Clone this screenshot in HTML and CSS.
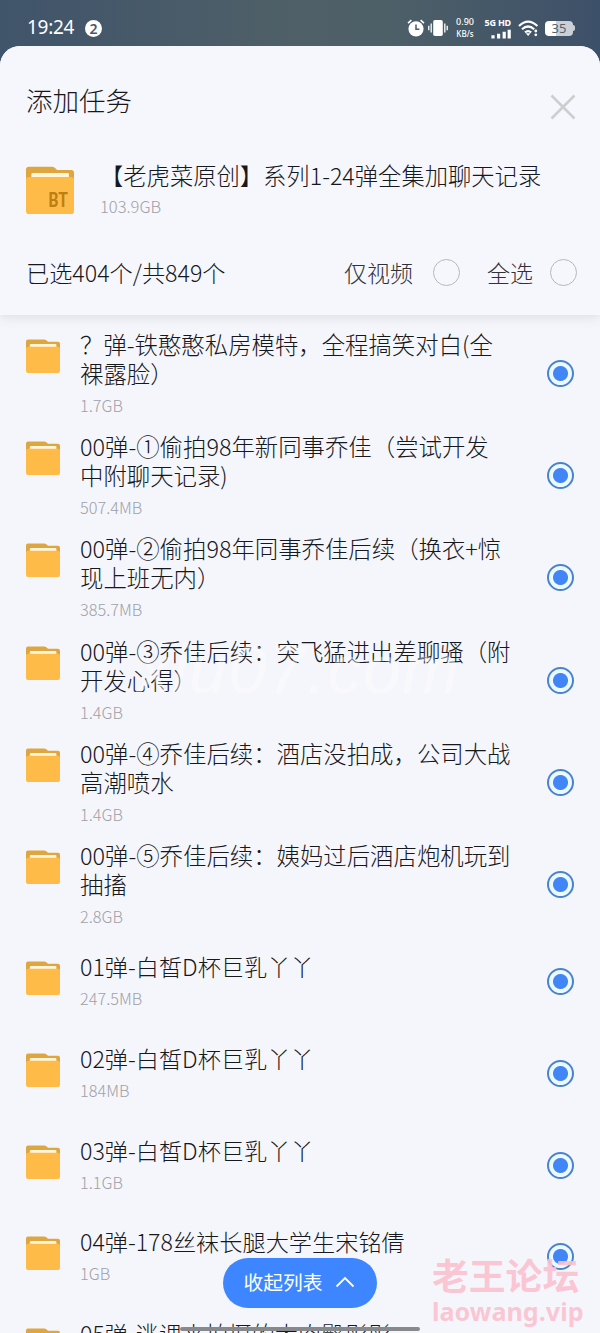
FILE: index.html
```html
<!DOCTYPE html>
<html lang="zh-CN">
<head>
<meta charset="utf-8">
<title>添加任务</title>
<link rel="stylesheet" href="styles.css">
</head>
<body>
<svg width="0" height="0" class="defs">
  <symbol id="folder" viewBox="0 0 34 34"><path d="M0 2.5Q0 .5 2 .5H18.5Q20 .5 21.2 2L22 2.8H32Q34 2.8 34 5V20H0Z" fill="#dfa640"/><rect x="3.8" y="5" width="26.6" height="6" rx="1" fill="#fff6dc"/><path d="M0 10Q0 7.8 2 7.8H32Q34 7.8 34 10V31.8Q34 34 32 34H2Q0 34 0 31.8Z" fill="#febb47"/></symbol>
</svg>
<div class="screen">
  <div class="status">
    <span class="time">19:24</span><span class="count">2</span>
    <div class="icons">
      <svg class="alarm" width="18" height="18" viewBox="0 0 18 18"><circle cx="9" cy="9.8" r="7.6" fill="#fff"/><path d="M1 4.2L4.4 1.2M17 4.2L13.6 1.2" stroke="#fff" stroke-width="1.6"/><path d="M9 5.5V10.3H12.4" fill="none" stroke="#4a5b68" stroke-width="1.5"/></svg>
      <svg class="vibrate" width="20" height="18" viewBox="0 0 20 18"><rect x="5.2" y="1" width="9.6" height="16" rx="1.8" fill="#fff"/><path d="M3.2 4.5V13.5M.8 6.7V11.3M16.8 4.5V13.5M19.2 6.7V11.3" stroke="#fff" stroke-width="1.3"/></svg>
      <div class="rate"><span>0.90</span><span>KB/s</span></div>
      <div class="signal"><span>5G HD</span><svg width="20" height="10" viewBox="0 0 20 10"><path d="M2 6.2V9.5M7.6 4.7V9.5M13.2 2.8V9.5M18.2 .8V9.5" stroke="#fff" stroke-width="3.2"/></svg></div>
      <svg class="wifi" width="21" height="17" viewBox="0 0 21 17"><g fill="none" stroke="#fff" stroke-width="2.2"><path d="M1 6Q10 -2.7 19.4 6M4 9.3Q10 3.7 16.2 9.3M7 12.4Q10 9.7 13.2 12.4"/></g><path d="M7.7 13.2H12.5L10.1 16Z" fill="#fff"/><circle cx="17.8" cy="11" r="1.4" fill="#fff"/><circle cx="17.8" cy="14.8" r="1.4" fill="#fff"/></svg>
      <span class="battery">35</span><i class="nub"></i>
    </div>
  </div>
  <main class="sheet">
    <header class="head">
      <div class="title-row"><h1>添加任务</h1><svg class="close" width="26" height="26" viewBox="0 0 26 26"><path d="M1.5 1.5L24.5 24.5M24.5 1.5L1.5 24.5" stroke="#ceced0" stroke-width="2.6"/></svg></div>
      <div class="task">
        <div class="bt"><svg width="48" height="48"><use href="#folder"/></svg><span>BT</span></div>
        <div class="task-text"><div class="task-name">【老虎菜原创】系列1-24弹全集加聊天记录</div><div class="task-size">103.9GB</div></div>
      </div>
      <div class="filters"><span class="chosen">已选404个/共849个</span><span class="label">仅视频</span><i class="ring"></i><span class="label all">全选</span><i class="ring"></i></div>
    </header>
    <section class="list">
      <article class="row"><svg class="folder"><use href="#folder"/></svg><div class="info"><div class="name">？弹-铁憨憨私房模特，全程搞笑对白(全<br>裸露脸）</div><div class="size">1.7GB</div></div><i class="radio"></i></article>
      <article class="row"><svg class="folder"><use href="#folder"/></svg><div class="info"><div class="name">00弹-①偷拍98年新同事乔佳（尝试开发<br>中附聊天记录)</div><div class="size">507.4MB</div></div><i class="radio"></i></article>
      <article class="row"><svg class="folder"><use href="#folder"/></svg><div class="info"><div class="name">00弹-②偷拍98年同事乔佳后续（换衣+惊<br>现上班无内）</div><div class="size">385.7MB</div></div><i class="radio"></i></article>
      <article class="row"><svg class="folder"><use href="#folder"/></svg><div class="info"><div class="name">00弹-③乔佳后续：突飞猛进出差聊骚（附<br>开发心得）</div><div class="size">1.4GB</div></div><i class="radio"></i></article>
      <article class="row"><svg class="folder"><use href="#folder"/></svg><div class="info"><div class="name">00弹-④乔佳后续：酒店没拍成，公司大战<br>高潮喷水</div><div class="size">1.4GB</div></div><i class="radio"></i></article>
      <article class="row"><svg class="folder"><use href="#folder"/></svg><div class="info"><div class="name">00弹-⑤乔佳后续：姨妈过后酒店炮机玩到<br>抽搐</div><div class="size">2.8GB</div></div><i class="radio"></i></article>
      <article class="row single"><svg class="folder"><use href="#folder"/></svg><div class="info"><div class="name">01弹-白皙D杯巨乳丫丫</div><div class="size">247.5MB</div></div><i class="radio"></i></article>
      <article class="row single"><svg class="folder"><use href="#folder"/></svg><div class="info"><div class="name">02弹-白皙D杯巨乳丫丫</div><div class="size">184MB</div></div><i class="radio"></i></article>
      <article class="row single"><svg class="folder"><use href="#folder"/></svg><div class="info"><div class="name">03弹-白皙D杯巨乳丫丫</div><div class="size">1.1GB</div></div><i class="radio"></i></article>
      <article class="row single"><svg class="folder"><use href="#folder"/></svg><div class="info"><div class="name">04弹-178丝袜长腿大学生宋铭倩</div><div class="size">1GB</div></div><i class="radio"></i></article>
      <article class="row single"><svg class="folder"><use href="#folder"/></svg><div class="info"><div class="name">05弹-逃课来拍摄的大肉臀彤彤</div></div></article>
    </section>
  </main>
  <div class="faint">xiu07.com</div>
  <div class="collapse">收起列表<svg width="20" height="12" viewBox="0 0 20 12"><path d="M1.5 10.5L10 2L18.5 10.5" fill="none" stroke="#fff" stroke-width="1.8"/></svg></div>
  <div class="home"></div>
  <div class="forum"><span class="forum-name">老王论坛</span><span class="forum-url">laowang.vip</span></div>
</div>
</body>
</html>
```
FILE: styles.css
```css
* { box-sizing: border-box; }
body { margin: 0; font-family: "Noto Sans CJK SC", sans-serif; font-weight: 300; color: #17181c; }
.defs { position: absolute; }
.screen { position: relative; width: 600px; height: 1333px; overflow: hidden; background: linear-gradient(90deg, #40546b, #4f6067 50%, #4d5f67 65%, #3d5069); }
.status { height: 46px; padding: 8px 25px 0 27px; display: flex; align-items: center; color: #fff; }
.time { font: 400 19px/46px "Noto Sans", sans-serif; width: 57px; white-space: nowrap; letter-spacing: -.3px; }
.count { width: 17px; height: 17px; border-radius: 50%; background: #fff; color: #46596b; font: 600 14px/17px "Noto Sans", sans-serif; text-align: center; margin: 2px 0 0 1px; }
.icons { margin-left: auto; display: flex; align-items: center; height: 28px; padding-top: 2px; }
.vibrate { margin-left: 3px; }
.rate { display: flex; flex-direction: column; align-items: center; width: 20px; margin-left: 7px; font: 500 9px/12px "Noto Sans", sans-serif; white-space: nowrap; }
.rate span:last-child { font-size: 8px; }
.signal { width: 28px; margin-left: 8px; display: flex; flex-direction: column; align-items: flex-end; font: 700 9px/12px "Noto Sans", sans-serif; white-space: nowrap; letter-spacing: -.2px; }
.wifi { margin-left: 7px; }
.battery { width: 28px; height: 15px; border-radius: 4px; margin-left: 6px; background: linear-gradient(90deg, #fff 38%, #cbd0d6 38%); color: #56616c; font: 400 13px/15px "Noto Sans", sans-serif; text-align: center; }
.nub { width: 2px; height: 6px; border-radius: 0 2px 2px 0; background: #cbd0d6; }
.sheet { height: 1287px; border-radius: 20px 20px 0 0; background: #f5f6fb; overflow: hidden; }
.head { height: 269px; position: relative; box-shadow: 0 2px 11px #dadce1; background: #f6f7fc; padding: 0 23px 0 26px; }
.title-row { display: flex; justify-content: space-between; height: 107px; padding-top: 35px; padding-right: 1px; }
h1 { margin: 0; font-size: 26.5px; font-weight: 300; line-height: 38px; height: 38px; }
.close { margin-top: 13px; }
.task { display: flex; height: 86px; padding-top: 13px; }
.bt { width: 48px; height: 48px; position: relative; }
.bt span { position: absolute; right: 6px; bottom: 3px; font: 700 20px/22px "Roboto", sans-serif; color: #bd7e13; transform: scaleX(.78); transform-origin: right; }
.task-text { margin-left: 26px; white-space: nowrap; }
.task-name { font-size: 23.3px; line-height: 29px; margin-top: -5px; }
.task-size { font-size: 16.5px; line-height: 22px; margin-top: 5px; color: #9fa1a7; }
.filters { display: flex; align-items: center; height: 66px; white-space: nowrap; }
.chosen { font-size: 23.2px; width: 318px; flex: none; }
.label { font-size: 23px; color: #303238; width: 89px; flex: none; }
.label.all { width: 63px; margin-left: 27px; }
.ring { width: 27px; height: 27px; border: 1.5px solid #b6b7ba; border-radius: 50%; flex: none; }
.list { padding: 8px 26px 0; }
.row { height: 102.2px; padding-top: 7px; display: flex; }
.row.single { height: 91.7px; padding-top: 16px; }
.folder { width: 34px; height: 34px; margin-top: 9px; flex: none; }
.info { width: 460px; margin-left: 20px; white-space: nowrap; }
.name { font-size: 23.4px; line-height: 29px; }
.single .name { font-size: 23.2px; }
.size { font-size: 16.3px; line-height: 22px; padding-top: 6px; color: #9fa1a7; }
.radio { width: 27px; height: 27px; margin-left: 6.5px; margin-top: 30px; border: 2px solid #4b82cf; border-radius: 50%; background: radial-gradient(circle, #4285f7 7px, #ebfaff 8px); flex: none; }
.single .radio { margin-top: 16px; }
.faint { position: absolute; left: 137px; top: 624px; font: italic 400 68px/90px "Liberation Sans", sans-serif; letter-spacing: 1.5px; color: rgba(255,255,255,.4); }
.collapse { position: absolute; left: 223px; top: 1258px; width: 154px; height: 50px; border-radius: 25px; background: #3e86ff; color: #fff; display: flex; align-items: center; justify-content: center; gap: 12px; padding: 0 2px 3px 0; font-size: 19.8px; font-weight: 400; }
.home { position: absolute; left: 180px; top: 1327px; width: 240px; height: 4px; border-radius: 2px; background: #88898c; }
.forum { position: absolute; left: 432px; top: 1253px; width: 153px; color: rgba(252,194,207,.92); font-weight: 700; display: flex; flex-direction: column; white-space: nowrap; }
.forum-name { font-size: 36.8px; line-height: 42px; }
.forum-url { font: 700 25.2px/32px "Noto Sans", sans-serif; }
```
